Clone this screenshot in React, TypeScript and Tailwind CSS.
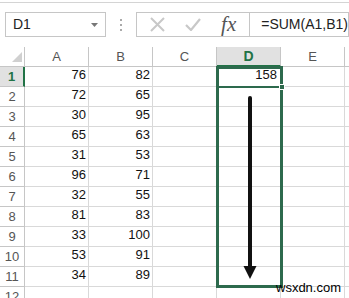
const rows: [number, string, string][] = [
  [1, "76", "82"],
  [2, "72", "65"],
  [3, "30", "95"],
  [4, "65", "63"],
  [5, "31", "53"],
  [6, "96", "71"],
  [7, "32", "55"],
  [8, "81", "83"],
  [9, "33", "100"],
  [10, "53", "91"],
  [11, "34", "89"],
  [12, "", ""],
];

const cols = ["A", "B", "C", "D", "E", ""];

const App: React.FC = () => {
  return (
    <div
      className="relative w-[349px] h-[298px] overflow-hidden bg-white text-[#222]"
      style={{ fontFamily: '"Liberation Sans", Arial, sans-serif' }}
    >
      {/* ribbon edge */}
      <div className="h-[3px] border-b border-[#d4d4d4]" />

      {/* formula bar */}
      <div className="flex mt-[9px] h-[25px]">
        <div className="ml-[5px] w-[102px] flex items-center justify-between border border-[#c6c6c6] pl-[7px] pr-[7px] text-[14px] text-[#222]">
          <span>D1</span>
          <svg width="7" height="4" viewBox="0 0 7 4">
            <path d="M0 0h7L3.5 4z" fill="#777" />
          </svg>
        </div>
        <div className="w-[30px] flex flex-col items-center justify-center gap-[3px]">
          <span className="w-[2px] h-[2px] bg-[#aaa]" />
          <span className="w-[2px] h-[2px] bg-[#aaa]" />
          <span className="w-[2px] h-[2px] bg-[#aaa]" />
        </div>
        <div className="w-[114px] flex items-center border border-r-0 border-[#c6c6c6]">
          <svg className="ml-[13px]" width="15" height="15" viewBox="0 0 15 15">
            <path d="M1 1l13 13M14 1L1 14" stroke="#c8c8c8" strokeWidth="2" />
          </svg>
          <svg className="ml-[20px]" width="16" height="13" viewBox="0 0 16 13">
            <path d="M1 7l5 5L15 1" stroke="#c8c8c8" strokeWidth="2.2" fill="none" />
          </svg>
          <span
            className="ml-[20px] text-[21px] italic text-[#555] leading-none"
            style={{ fontFamily: '"Liberation Serif", serif' }}
          >
            fx
          </span>
        </div>
        <div className="flex-1 flex items-center border border-[#c6c6c6] pl-[11px] text-[14px] text-[#222]">
          =SUM(A1,B1)
        </div>
      </div>

      {/* grid */}
      <div className="mt-[10px] grid grid-cols-[25px_64px_64px_64px_64px_64px_64px] auto-rows-[20px] text-[13px]">
        <div className="relative border-r border-b border-[#c6c6c6]">
          <svg className="absolute left-[12px] top-[5px]" width="10" height="10" viewBox="0 0 10 10">
            <path d="M10 0v10H0z" fill="#d0d0d0" />
          </svg>
        </div>
        {cols.map((c) => (
          <div
            key={c || "f"}
            className={
              c === "D"
                ? "flex items-center justify-center bg-[#e1e1e1] border-r border-b-2 border-b-[#217346] border-r-[#c6c6c6] font-bold text-[#217346] text-[14px]"
                : "flex items-center justify-center border-r border-b border-[#c6c6c6] text-[#555]"
            }
          >
            {c}
          </div>
        ))}
        {rows.map(([n, a, b]) => (
          <>
            <div
              key={"h" + n}
              className={
                n === 1
                  ? "flex items-center justify-center bg-[#e1e1e1] border-r-2 border-r-[#217346] border-b border-b-[#c6c6c6] text-[#217346] font-bold"
                  : "flex items-center justify-center border-r border-b border-[#c6c6c6] text-[#555]"
              }
            >
              {n}
            </div>
            <div key={"a" + n} className="flex items-end justify-end pr-[2px] pb-[2px] border-r border-b border-[#d9d9d9] text-[#111]">
              {a}
            </div>
            <div key={"b" + n} className="flex items-end justify-end pr-[2px] pb-[2px] border-r border-b border-[#d9d9d9] text-[#111]">
              {b}
            </div>
            <div key={"c" + n} className="border-r border-b border-[#d9d9d9]" />
            <div key={"d" + n} className="flex items-end justify-end pr-[3px] pb-[2px] border-r border-b border-[#d9d9d9] text-[#111]">
              {n === 1 ? "158" : ""}
            </div>
            <div key={"e" + n} className="border-r border-b border-[#d9d9d9]" />
            <div key={"f" + n} className="border-r border-b border-[#d9d9d9]" />
          </>
        ))}
      </div>

      {/* selection */}
      <div className="absolute left-[216px] top-[66px] w-[67px] h-[222px] border-[3px] border-[#2d6a4d]" />
      <div className="absolute left-[216px] top-[86px] w-[66px] h-[2px] bg-[#2d6a4d]" />
      <div className="absolute left-[279px] top-[84px] w-[6px] h-[6px] bg-[#2d6a4d] border border-white" />

      {/* arrow */}
      <svg className="absolute left-[242px] top-[96px]" width="16" height="184" viewBox="0 0 16 184">
        <path d="M8 2V172" stroke="#111" strokeWidth="4" strokeLinecap="round" />
        <path d="M1.5 170L14.5 170L8 183z" fill="#111" />
      </svg>

      <span className="absolute left-[276px] top-[280px] text-[13px] text-black leading-[16px]">wsxdn.com</span>
    </div>
  );
};

export default App;
